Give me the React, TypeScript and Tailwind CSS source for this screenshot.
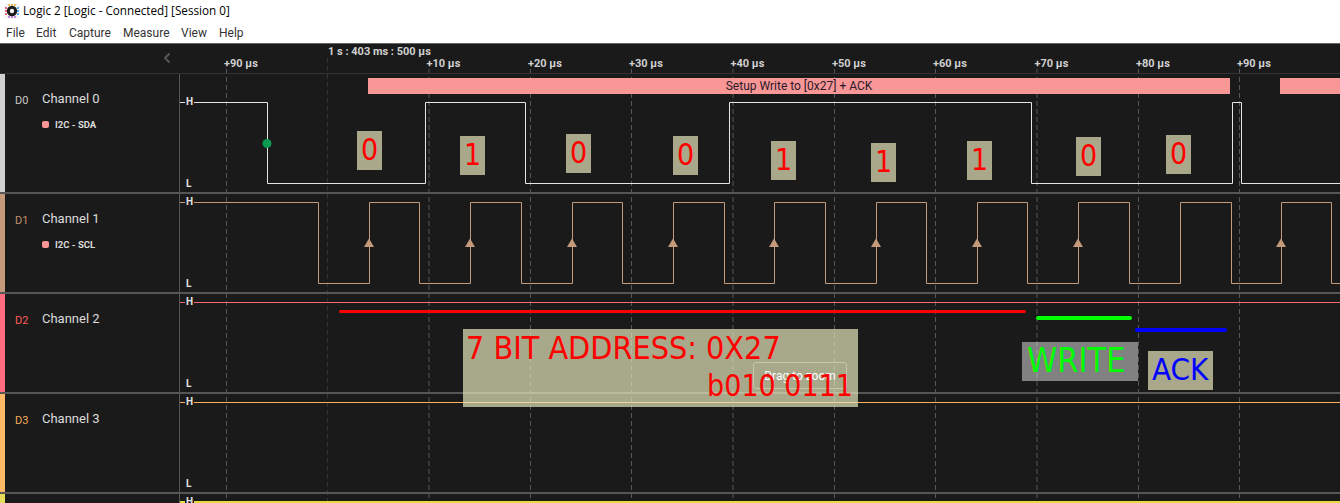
import React from "react";
import { ChevronLeft } from "lucide-react";

const menuItems = [
  { label: "File", width: "w-[30px]" },
  { label: "Edit", width: "w-[33px]" },
  { label: "Capture", width: "w-[54px]" },
  { label: "Measure", width: "w-[58px]" },
  { label: "View", width: "w-[38px]" },
  { label: "Help", width: "w-[30px]" },
];

const gridLines = [226.5, 429, 530.5, 631.5, 733, 834.5, 935.5, 1037, 1138.5, 1239.5];
const tickLabels = ["+90 µs", "+10 µs", "+20 µs", "+30 µs", "+40 µs", "+50 µs", "+60 µs", "+70 µs", "+80 µs", "+90 µs"];

const sdaEdges = [267.5, 425.5, 525.5, 729.5, 1031.5, 1232.5, 1241.5];
const sclEdges = [318.5, 369.5, 419.5, 470.5, 521.5, 572.5, 622.5, 673.5, 724.5, 774.5, 825.5, 876.5, 926.5, 977.5, 1027.5, 1078.5, 1129.5, 1180.5, 1231.5, 1281.5, 1331.5];
const sclArrows = [369.5, 470.5, 572.5, 673.5, 774.5, 876.5, 977.5, 1078.5, 1281.5];

const digits = [
  { value: "0", left: "left-[357px]", top: "top-[131px]" },
  { value: "1", left: "left-[460px]", top: "top-[136px]" },
  { value: "0", left: "left-[566px]", top: "top-[134px]" },
  { value: "0", left: "left-[673px]", top: "top-[136px]" },
  { value: "1", left: "left-[771px]", top: "top-[141px]" },
  { value: "1", left: "left-[871px]", top: "top-[143px]" },
  { value: "1", left: "left-[967px]", top: "top-[141px]" },
  { value: "0", left: "left-[1076px]", top: "top-[137px]" },
  { value: "0", left: "left-[1166px]", top: "top-[135px]" },
];

const channels = [
  { id: "D0", name: "Channel 0", strip: "bg-[#d0d0d0]", idColor: "text-[#c8c8c8]", h: "h-[120px]", analyzer: "I2C - SDA", hTop: "top-[22px]", lTop: "top-[104px]" },
  { id: "D1", name: "Channel 1", strip: "bg-[#c49a7b]", idColor: "text-[#c0906c]", h: "h-[100px]", analyzer: "I2C - SCL", hTop: "top-[2px]", lTop: "top-[84px]" },
  { id: "D2", name: "Channel 2", strip: "bg-[#ff6b81]", idColor: "text-[#ff5c5c]", h: "h-[100px]", analyzer: "", hTop: "top-[2px]", lTop: "top-[84px]" },
  { id: "D3", name: "Channel 3", strip: "bg-[#ffb866]", idColor: "text-[#f5ad5c]", h: "h-[100px]", analyzer: "", hTop: "top-[2px]", lTop: "top-[84px]" },
  { id: "", name: "", strip: "bg-[#e6dc5a]", idColor: "", h: "h-[100px]", analyzer: "", hTop: "top-[2px]", lTop: "top-[84px]" },
];

// step trace from a list of edge positions, starting high
const tracePoints = (edges: number[], high: number, low: number) => {
  const pts: string[] = ["180," + high];
  let y = high;
  edges.forEach((x) => {
    pts.push(x + "," + y);
    y = y === high ? low : high;
    pts.push(x + "," + y);
  });
  pts.push("1340," + y);
  return pts.join(" ");
};

const Logo = () => (
  <svg width="16" height="16" viewBox="0 0 16 16" className="shrink-0">
    <rect x="0" y="0" width="16" height="16" rx="3" fill="#f4f4f4" />
    <path d="M5 3V1M8 3V1M11 3V1" stroke="#f5a623" strokeWidth="1.4" />
    <path d="M5 15v-2M8 15v-2M11 15v-2" stroke="#b05ce0" strokeWidth="1.4" />
    <path d="M1 5h2M1 8h2M1 11h2" stroke="#f0385a" strokeWidth="1.4" />
    <path d="M13 5h2M13 8h2M13 11h2" stroke="#2a9df4" strokeWidth="1.4" />
    <circle cx="8" cy="8" r="5.2" fill="#1c1c1c" />
    <circle cx="8" cy="8" r="2.2" fill="#f4f4f4" />
  </svg>
);

const Waves = () => (
  <svg width="1340" height="503" className="absolute left-0 top-0" fill="none">
    <line x1="327.5" y1="58" x2="327.5" y2="503" stroke="#333" strokeDasharray="5 3" />
    {gridLines.map((x) => (
      <line key={x} x1={x} y1="69" x2={x} y2="503" stroke="#575757" strokeDasharray="5 3" />
    ))}
    <polyline points={tracePoints(sdaEdges, 102.5, 183.5)} stroke="#e4e4e4" />
    <polyline points={tracePoints(sclEdges, 202.5, 283.5)} stroke="#c49a7b" />
    {sclArrows.map((x) => (
      <path key={x} d={`M${x - 0.5} 238.5l5 8.5h-10z`} fill="#c49a7b" />
    ))}
    <line x1="180" y1="302.5" x2="1340" y2="302.5" stroke="#ff6b6b" />
    <line x1="180" y1="402.5" x2="1340" y2="402.5" stroke="#ffb05c" />
    <line x1="180" y1="502" x2="1340" y2="502" stroke="#e6dc3c" strokeWidth="2" />
    <circle cx="267" cy="143.5" r="4.5" fill="#0a9a50" />
  </svg>
);

const Channel = ({ channel }: { channel: (typeof channels)[number] }) => (
  <div className={`relative flex border-b-2 border-[#565656] ${channel.h}`}>
    <div className={`w-[5px] shrink-0 ${channel.strip}`} />
    <div className="w-[175px] shrink-0 border-r border-[#565656] pl-[10px] pt-[17px]">
      {channel.name && (
        <div className="flex items-center">
          <span className={`w-[27px] translate-y-[2px] text-[11px] ${channel.idColor}`}>{channel.id}</span>
          <span className="text-[13px] leading-[16px] text-[#dcdcdc]">{channel.name}</span>
        </div>
      )}
      {channel.analyzer && (
        <div className="mt-[10px] flex items-center gap-[6px] pl-[27px]">
          <span className="h-[7px] w-[7px] rounded-[2px] bg-[#f99797]" />
          <span className="text-[9.5px] leading-[14px] font-bold text-[#dcdcdc]">{channel.analyzer}</span>
        </div>
      )}
    </div>
    <span className={`absolute left-[185px] bg-[#1a1a1a] px-[1px] text-[10px] leading-[12px] font-bold text-[#e4e4e4] ${channel.hTop}`}>H</span>
    {channel.name && (
      <span className={`absolute left-[185px] px-[1px] text-[10px] leading-[12px] font-bold text-[#e4e4e4] ${channel.lTop}`}>L</span>
    )}
  </div>
);

const Annotations = () => (
  <>
    {digits.map((d) => (
      <div
        key={d.left}
        className={`absolute flex h-[39px] w-[25px] items-center justify-center bg-[#a9a88a] pb-[2px] font-['DejaVu_Sans_Condensed','DejaVu_Sans',sans-serif] text-[30px] text-[#ff0000] ${d.left} ${d.top}`}
      >
        {d.value}
      </div>
    ))}
    <div className="absolute left-[339px] top-[310px] h-[3px] w-[687px] rounded-full bg-[#ff0000]" />
    <div className="absolute left-[1036px] top-[316px] h-[4px] w-[96px] rounded-full bg-[#00ff00]" />
    <div className="absolute left-[1135px] top-[328px] h-[4px] w-[92px] rounded-full bg-[#0000ff]" />
    <div className="absolute left-[463px] top-[329px] h-[78px] w-[395px] bg-[#e6e5ba]/70 pl-[3px] pr-[5px] font-['DejaVu_Sans_Condensed','DejaVu_Sans',sans-serif] leading-[38px] text-[#ff0000]">
      <div className="absolute left-[290px] top-[33px] flex h-[27px] w-[94px] items-center justify-center rounded-[3px] border border-[#c6c6aa] font-['Roboto'] text-[12px] text-white">
        Drag to zoom
      </div>
      <div className="relative whitespace-nowrap text-[32px]">7 BIT ADDRESS: 0X27</div>
      <div className="relative whitespace-nowrap text-right text-[30px]">b010 0111</div>
    </div>
    <div className="absolute left-[1022px] top-[342px] h-[39px] w-[116px] whitespace-nowrap bg-white/45 pl-[5px] font-['DejaVu_Sans_Condensed','DejaVu_Sans',sans-serif] text-[34px] leading-[37px] text-[#00ff00]">
      WRITE
    </div>
    <div className="absolute left-[1148px] top-[351px] h-[39px] w-[65px] whitespace-nowrap bg-[#a9a88a] pl-[4px] font-['DejaVu_Sans_Condensed','DejaVu_Sans',sans-serif] text-[31px] leading-[37px] text-[#0000ff]">
      ACK
    </div>
  </>
);

const App: React.FC = () => {
  return (
    <div className="relative h-[503px] w-[1340px] overflow-hidden bg-[#1a1a1a] font-['Roboto',sans-serif]">
      <div className="relative flex h-[22px] items-center gap-[3px] bg-white pl-[4px]">
        <Logo />
        <span className="font-['Open_Sans'] text-[11.7px] text-black">Logic 2 [Logic - Connected] [Session 0]</span>
      </div>
      <div className="relative flex h-[22px] items-center border-b border-[#666] bg-white pl-[6px]">
        {menuItems.map((item) => (
          <span key={item.label} className={`text-[12px] text-[#333] ${item.width}`}>
            {item.label}
          </span>
        ))}
      </div>
      <Waves />
      <div className="relative h-[30px] border-b border-[#333]">
        <ChevronLeft strokeWidth={3} className="absolute left-[159px] top-[6px] h-[16px] w-[16px] text-[#555]" />
        <span className="absolute left-[328px] top-[1px] text-[11px] leading-[14px] font-bold text-[#d0d0d0]">1 s : 403 ms : 500 µs</span>
        {gridLines.map((x, i) => (
          <span
            key={x}
            className="absolute top-[13px] whitespace-nowrap text-[11px] leading-[14px] font-bold text-[#d0d0d0]"
            style={{ left: x - 2.5 }}
          >
            {tickLabels[i]}
          </span>
        ))}
      </div>
      {channels.map((channel) => (
        <Channel key={channel.strip} channel={channel} />
      ))}
      <div className="absolute left-[368px] top-[78px] flex h-[16px] w-[862px] items-center justify-center bg-[#f99797] text-[12px] text-[#2a1a2a]">
        Setup Write to [0x27] + ACK
      </div>
      <div className="absolute left-[1280px] top-[78px] h-[16px] w-[60px] bg-[#f99797]" />
      <Annotations />
    </div>
  );
};

export default App;
